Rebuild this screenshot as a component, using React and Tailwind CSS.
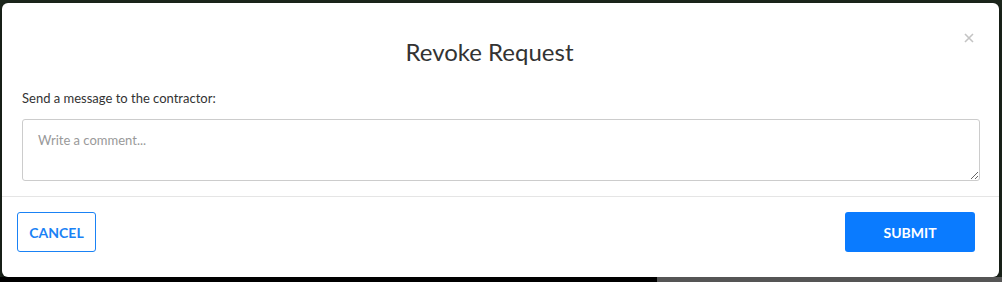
import { useState } from "react"

export default function App() {
  const [comment, setComment] = useState("")

  return (
    <div className="w-[1002px] h-[282px] overflow-hidden bg-[#1d271d] flex flex-col pt-[3px] pl-[2px] pr-[3px]" style={{ fontFamily: "Lato, 'Open Sans', sans-serif" }}>
      {/* Modal */}
      <div className="h-[274px] bg-white rounded-[6px] shadow-[0_3px_9px_rgba(0,0,0,0.5)] flex flex-col shrink-0">
        {/* Header */}
        <div className="relative pt-[36px] pr-[22px] text-center">
          <h2 className="text-[24px] leading-[26px] text-[#333]">Revoke Request</h2>
          <button className="absolute right-[25px] top-[30px] w-[10px] h-[10px] text-[#c4c4c4]" aria-label="Close">
            <svg viewBox="0 0 10 10" width="10" height="10" stroke="currentColor" strokeWidth="1.6">
              <path d="M1 1 L9 9 M9 1 L1 9" />
            </svg>
          </button>
        </div>

        {/* Body */}
        <div className="pl-[20px] pr-[19px] pt-[23px] pb-[15px]">
          <label className="block text-[13px] leading-[20px] text-[#333] mb-[11px]">Send a message to the contractor:</label>
          <textarea
            value={comment}
            onChange={(e) => setComment(e.target.value)}
            placeholder="Write a comment..."
            className="block w-full h-[62px] border border-[#ccc] rounded-[3px] px-[15px] py-[10px] text-[13px] leading-[20px] text-[#333] placeholder:text-[#999] outline-none"
          />
        </div>

        {/* Footer */}
        <div className="border-t border-[#e5e5e5] flex justify-between items-center pl-[15px] pr-[24px] pt-[15px]">
          <button className="h-[40px] w-[79px] border border-[#1a82f5] rounded-[3px] text-[#1a82f5] text-[14px] font-bold">CANCEL</button>
          <button className="h-[40px] w-[130px] bg-[#0a7bff] rounded-[3px] text-white text-[14px] font-bold">SUBMIT</button>
        </div>
      </div>

      {/* backdrop below modal */}
      <div className="flex h-[5px] -ml-[2px] -mr-[3px]">
        <div className="flex-1 bg-black" />
        <div className="w-[345px] bg-[#555]" />
      </div>
    </div>
  )
}
